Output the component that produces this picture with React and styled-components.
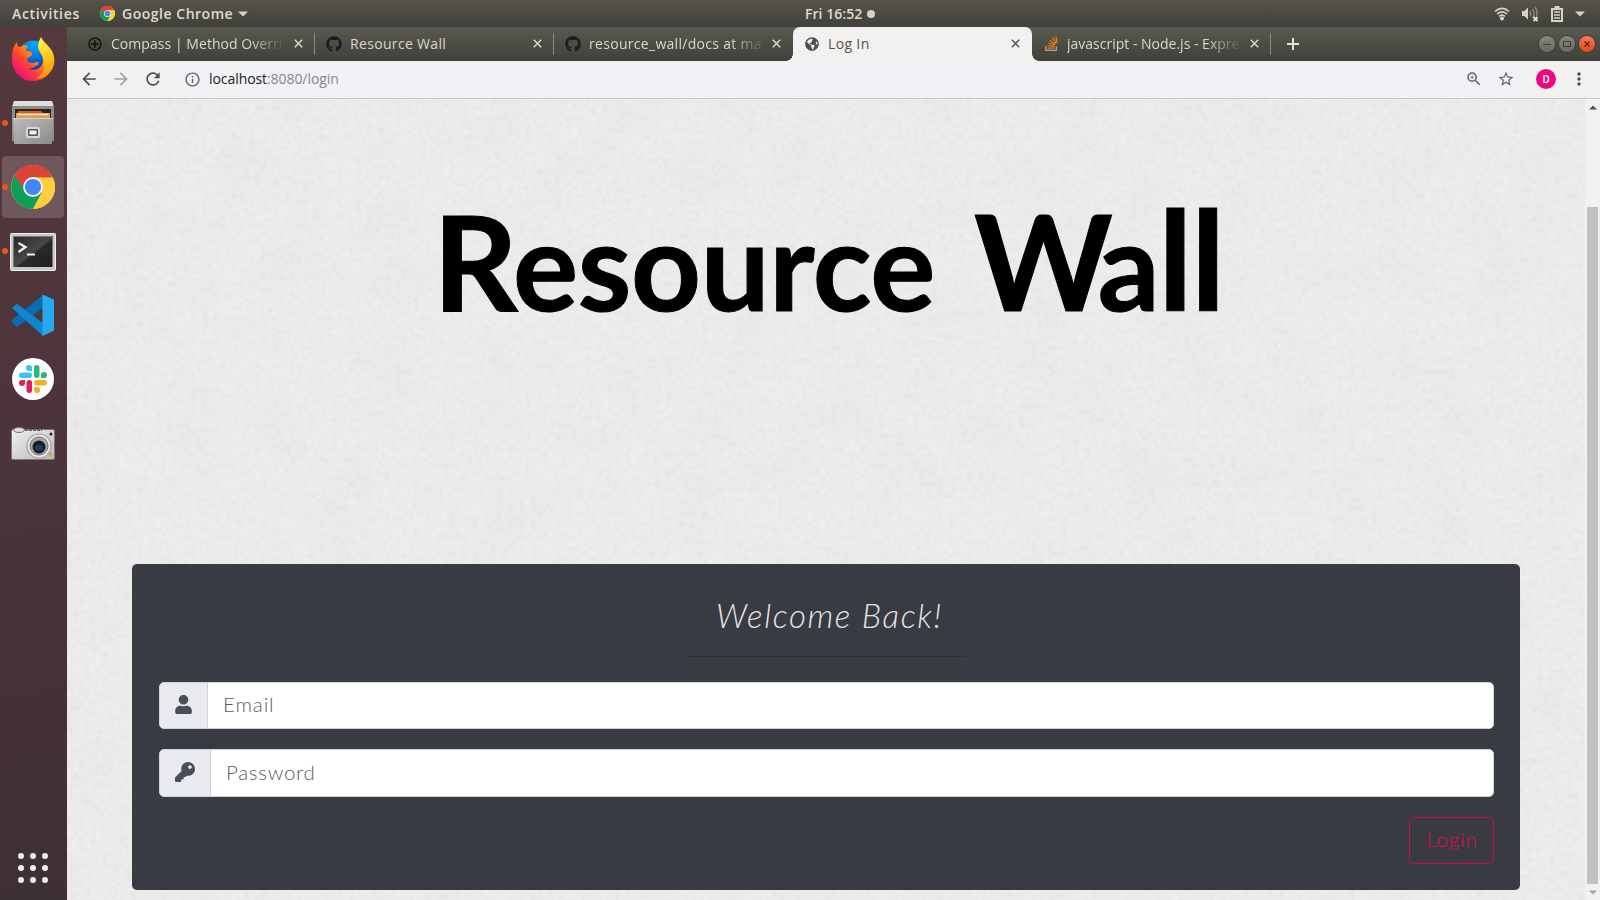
import React from "react";
import styled, { createGlobalStyle } from "styled-components";
import { FaGithub, FaUser, FaKey, FaGlobeAmericas } from "react-icons/fa";
import { MdArrowBack, MdArrowForward, MdRefresh, MdInfoOutline, MdStarBorder, MdOutlineZoomIn } from "react-icons/md";

const Global = createGlobalStyle`
  * { box-sizing: border-box; }
  html, body { margin: 0; overflow: hidden; }
  body { font-family: "Open Sans", "Noto Sans", sans-serif; }
  svg { display: block; flex: none; }
`;

const Desktop = styled.div`
  display: flex;
  flex-direction: column;
  width: 1600px;
  height: 900px;
  overflow: hidden;
`;

/* ---------- system bar ---------- */
const SystemBar = styled.header`
  display: grid;
  grid-template-columns: 1fr auto 1fr;
  align-items: center;
  height: 27px;
  flex: none;
  background: linear-gradient(#58544c, #403f3a);
  color: #dfdbd2;
  font-weight: 600;
  font-size: 14px;
  line-height: 26px;
  white-space: nowrap;
`;
const BarLeft = styled.div`
  display: flex;
  align-items: center;
  padding-left: 12px;
`;
const BarText = styled.span`
  padding-left: ${(p) => p.$pad || 0}px;
  letter-spacing: ${(p) => p.$track || 0}px;
  width: ${(p) => p.$w}px;
`;
const BarClock = styled.div`
  display: flex;
  align-items: center;
  gap: 4px;
  padding-left: 80px;
`;
const Dot = styled.i`
  width: 8px;
  height: 8px;
  border-radius: 50%;
  background: #d5d2ca;
`;
const BarRight = styled.div`
  display: flex;
  justify-content: flex-end;
  align-items: center;
  gap: 12px;
  padding-right: 15px;
`;

const Main = styled.div`
  display: flex;
  flex: 1;
  min-height: 0;
`;

/* ---------- dock ---------- */
const Dock = styled.nav`
  display: flex;
  flex-direction: column;
  width: 67px;
  flex: none;
  padding-bottom: 8px;
  background: linear-gradient(172deg, #54393d 0%, #4c343a 45%, #453137 75%, #3e3133 100%);
`;
const DockItem = styled.div`
  display: flex;
  align-items: center;
  height: 62px;
  width: 62px;
  margin: 1px 0 1px 2px;
  border-radius: 4px;
  background: ${(p) => (p.$active ? "#6f585c" : "transparent")};
`;
const RunningDot = styled.i`
  width: 6px;
  height: 6px;
  border-radius: 50%;
  background: ${(p) => (p.$on ? "#e95420" : "transparent")};
`;
const DockIcon = styled.div`
  display: flex;
  justify-content: center;
  width: 50px;
  padding-top: ${(p) => p.$drop || 0}px;
`;
const AppsGrid = styled.div`
  display: grid;
  grid-template-columns: repeat(3, 6px);
  gap: 6px;
  margin: auto 0 9px 18px;
`;
const AppDot = styled.i`
  width: 6px;
  height: 6px;
  border-radius: 50%;
  background: #f0eeee;
`;

/* ---------- browser ---------- */
const Browser = styled.section`
  display: flex;
  flex-direction: column;
  flex: 1;
  min-width: 0;
`;
const TabStrip = styled.div`
  display: flex;
  height: 34px;
  flex: none;
  padding-left: 9px;
  background: linear-gradient(#5b5a50, #403f39);
`;
const Tab = styled.div`
  position: relative;
  display: flex;
  align-items: center;
  width: 239px;
  padding: 0 10px 1px 11px;
  border-right: 1px solid ${(p) => (p.$line ? "#8b8a80" : "transparent")};
  border-image: ${(p) => (p.$line ? "linear-gradient(transparent 20%, #8b8a80 20%, #8b8a80 80%, transparent 80%) 1" : "none")};
  color: ${(p) => (p.$active ? "#53514b" : "#dad8cb")};
  ${(p) =>
    p.$active &&
    `
    background: #f2f1ef;
    border-right: 0;
    padding-right: 11px;
    border-radius: 7px 7px 0 0;
    &::before, &::after {
      content: "";
      position: absolute;
      bottom: 0;
      width: 7px;
      height: 7px;
    }
    &::before { left: -7px; background: radial-gradient(circle at 0 0, transparent 6.5px, #f2f1ef 7px); }
    &::after { right: -7px; background: radial-gradient(circle at 100% 0, transparent 6.5px, #f2f1ef 7px); }
  `}
`;
const TabIcon = styled.span`
  display: flex;
  justify-content: center;
  width: 16px;
  margin-right: 8px;
  color: ${(p) => p.$color};
`;
const TabTitle = styled.span`
  white-space: nowrap;
  font-size: 14px;
  line-height: 24px;
  letter-spacing: ${(p) => p.$track || 0}px;
  mask-image: ${(p) => (p.$fade ? "linear-gradient(90deg, #000 calc(100% - 34px), rgba(0, 0, 0, 0.12))" : "none")};
`;
const TabClose = styled.span`
  display: flex;
  justify-content: center;
  margin-left: auto;
  width: 11px;
`;
const NewTab = styled.span`
  display: flex;
  align-items: center;
  padding-left: 16px;
`;
const WindowButtons = styled.div`
  display: flex;
  align-items: center;
  gap: 4px;
  margin-left: auto;
  padding-right: 5px;
`;
const WinButton = styled.span`
  display: flex;
  align-items: center;
  justify-content: center;
  width: 16px;
  height: 16px;
  border-radius: 50%;
  background: ${(p) => (p.$close ? "linear-gradient(#f37e5a, #e2451a)" : "linear-gradient(#86867e, #6a6a62)")};
  box-shadow: 0 0 0 1px #3b3a35;
`;

const Toolbar = styled.div`
  display: flex;
  align-items: center;
  height: 38px;
  flex: none;
  padding: 0 12px 1px 12px;
  border-bottom: 1px solid #c8c8c6;
  background: #f2f1ef;
  color: #4d4d4d;
`;
const NavButton = styled.span`
  display: flex;
  width: 32px;
  opacity: ${(p) => (p.$off ? 0.48 : 1)};
`;
const Omnibox = styled.div`
  display: flex;
  align-items: center;
  flex: 1;
  height: 28px;
  margin-right: 11px;
  padding: 0 10px 0 9px;
  border-radius: 14px;
  background: #f1f2f5;
  color: #5f6368;
`;
const Url = styled.span`
  flex: 1;
  padding-left: 8px;
  font-size: 14px;
  line-height: 26px;
  letter-spacing: -0.07px;
  color: #85878b;
  b { color: #202124; font-weight: 400; }
`;
const OmniAction = styled.span`
  display: flex;
  margin-left: 14px;
`;
const Avatar = styled.span`
  display: flex;
  align-items: center;
  justify-content: center;
  width: 20px;
  height: 20px;
  margin-right: 14px;
  border-radius: 50%;
  background: #f0047f;
  color: #fff;
  font: 500 11px Roboto, sans-serif;
`;

const Viewport = styled.div`
  display: flex;
  flex: 1;
  min-height: 0;
`;
const Page = styled.main`
  position: relative;
  display: flex;
  flex-direction: column;
  flex: 1;
  background: #eeedec;
`;
const Paper = styled.svg`
  position: absolute;
  inset: 0;
  width: 100%;
  height: 100%;
`;
const Scrollbar = styled.div`
  display: flex;
  flex-direction: column;
  align-items: center;
  width: 15px;
  padding: 6px 0 5px;
  background: #f1f1f1;
`;
const Thumb = styled.div`
  width: 11px;
  height: 678px;
  margin: 97px 0 6px;
  background: #c1c1c1;
`;

const Hero = styled.h1`
  position: relative;
  display: flex;
  align-items: baseline;
  height: 465px;
  margin: 0;
  padding: 79px 0 0 366px;
  color: #000;
  font: 700 122px/160px Lato, sans-serif;
  -webkit-text-stroke: 1px #000;
  white-space: nowrap;
`;
const HeroWord = styled.span`
  display: block;
  width: ${(p) => p.$w}px;
  letter-spacing: ${(p) => p.$track}px;
  &::first-letter {
    font-size: 132px;
    letter-spacing: ${(p) => p.$capTrack}px;
  }
`;
const Tall = styled.span`
  font-size: 138px;
`;
const Card = styled.form`
  position: relative;
  display: flex;
  flex-direction: column;
  width: 1388px;
  height: 326px;
  margin-left: 65px;
  padding: 28px 26px 26px 27px;
  border-radius: 5px;
  background: #393b43;
  font-family: Lato, sans-serif;
  font-weight: 300;
`;
const Welcome = styled.h2`
  align-self: center;
  margin: 0 0 0 6px;
  color: #e4e4e4;
  font: italic 300 33px/46px Lato, sans-serif;
  letter-spacing: 1.6px;
`;
const Rule = styled.hr`
  width: 278px;
  height: 1px;
  margin: 18px 0 25px 528px;
  border: 0;
  background: #30312f;
`;
const Field = styled.label`
  display: flex;
  height: ${(p) => p.$h}px;
  margin-bottom: 20px;
  overflow: hidden;
  border: 1px solid #ced4da;
  border-radius: 5px;
  background: #fff;
`;
const Addon = styled.span`
  display: flex;
  align-items: center;
  justify-content: center;
  width: ${(p) => p.$w}px;
  padding-bottom: 2px;
  border-right: 1px solid #ced4da;
  background: #e9eaee;
  color: #4a4e58;
`;
const Input = styled.input`
  flex: 1;
  padding: 0 0 3px 15px;
  border: 0;
  outline: 0;
  font: 300 20.5px Lato, sans-serif;
  letter-spacing: ${(p) => p.$track}px;
  &::placeholder { color: #555c66; opacity: 1; }
`;
const LoginButton = styled.button`
  align-self: flex-end;
  width: 85px;
  height: 47px;
  padding: 0 0 3px 1px;
  border: 1px solid #d10a45;
  border-radius: 5px;
  background: transparent;
  color: #e80549;
  font: 300 20.5px Lato, sans-serif;
  letter-spacing: 0.8px;
`;

/* ---------- drawings ---------- */
const Caret = () => (
  <svg width="10" height="6" viewBox="0 0 10 6"><path d="M0 .5h10L5 5.5z" fill="#d5d2ca" /></svg>
);
const Cross = () => (
  <svg width="9" height="9" viewBox="0 0 9 9"><path d="M.8.8l7.4 7.4M8.2.8L.8 8.2" stroke="currentColor" strokeWidth="1.500" /></svg>
);
const Chrome = ({ size }) => (
  <svg width={size} height={size} viewBox="0 0 48 48">
    <circle cx="24" cy="24" r="24" fill="#fccd3f" />
    <path d="M24 24L13.6 30 3.2 12A24 24 0 0 1 44.8 12L46 14H24z" fill="#dc4437" />
    <path d="M3.5 12A24 24 0 0 0 24 48l10.4-18-10.4-5-8 2z" fill="#109d58" />
    <path d="M24 13.5h21.6A24 24 0 0 1 24 48l10-19z" fill="#fccd3f" />
    <circle cx="24" cy="24" r="10.8" fill="#f3f3f3" />
    <circle cx="24" cy="24" r="8.8" fill="#4285f4" />
  </svg>
);
const Firefox = () => (
  <svg width="44" height="46" viewBox="0 0 44 46">
    <defs>
      <linearGradient id="ffBody" x1=".9" y1=".1" x2=".15" y2=".8">
        <stop offset="0" stopColor="#ffe226" /><stop offset=".38" stopColor="#ff9a12" /><stop offset=".68" stopColor="#ff4530" /><stop offset="1" stopColor="#ee1478" />
      </linearGradient>
      <linearGradient id="ffTail" x1=".4" y1="0" x2=".6" y2="1">
        <stop offset="0" stopColor="#fff44f" /><stop offset=".5" stopColor="#ffc71f" /><stop offset="1" stopColor="#ff8a13" />
      </linearGradient>
      <radialGradient id="ffGlobe" cx=".5" cy=".1" r=".9">
        <stop offset="0" stopColor="#0aa8f8" /><stop offset=".55" stopColor="#0762d4" /><stop offset="1" stopColor="#33128a" />
      </radialGradient>
    </defs>
    <circle cx="23" cy="22" r="17.500" fill="url(#ffGlobe)" />
    <path d="M6 6c0 3 1 5 3 5 3-2 6-2 8-1-2 2-2 4-2 5 3 0 7 1 6 4-1 2-5 2-5 5 1 3 5 4 10 2 3 0 2 3-1 4-3 2-5 3-8 2 6 4 15 1 15-8 0-5-3-9-4-13L41 15c6 15-4 30-19 30C8 45 0 33 1 21 1 14 3 9 6 6z" fill="url(#ffBody)" />
    <path d="M30 1c2 5 9 9 12 16 3 8 1 17-6 22-4 3-7 4-11 3 8-3 9-11 8-17-1-7-6-9-6-15 0-4 2-7 3-9z" fill="url(#ffTail)" />
  </svg>
);
const Files = () => (
  <svg width="42" height="44" viewBox="0 0 42 44">
    <defs>
      <linearGradient id="cabinet" x1="0" y1="0" x2="1" y2="1"><stop offset="0" stopColor="#bdbdbd" /><stop offset="1" stopColor="#8a8a8a" /></linearGradient>
    </defs>
    <path d="M2 0h38l2 6v34H0V6z" fill="#8c8c8c" />
    <path d="M2 0h38l1.500 5H.5z" fill="#dedede" />
    <path d="M3 8h36v12H3z" fill="#292522" />
    <path d="M6 10h23l2 2h6v7H5z" fill="#d65a1c" />
    <path d="M4 12h34v6H4z" fill="#e99952" />
    <path d="M6 13.500h30" stroke="#fff6df" strokeWidth="1.300" />
    <path d="M1 17h40l-1 26H2z" fill="url(#cabinet)" />
    <path d="M1.500 17.500h39" stroke="#d2d2d2" />
    <rect x="14" y="26" width="14" height="11" rx="2" fill="#d8d8d8" />
    <rect x="16" y="28" width="10" height="7" rx="1" fill="#555" />
    <rect x="17.500" y="29.500" width="7" height="4" fill="#eee" />
  </svg>
);
const Terminal = () => (
  <svg width="46" height="38" viewBox="0 0 46 38">
    <defs>
      <linearGradient id="screen" x1="0" y1="0" x2="1" y2="1"><stop offset="0" stopColor="#2a2a2a" /><stop offset=".5" stopColor="#484848" /><stop offset=".55" stopColor="#292929" /><stop offset="1" stopColor="#202020" /></linearGradient>
    </defs>
    <rect x=".5" y=".5" width="45" height="37" rx="1" fill="#c9c9c9" stroke="#eee" />
    <rect x="3" y="3" width="40" height="31" fill="#777" />
    <rect x="4" y="4" width="38" height="30" fill="url(#screen)" />
    <path d="M8.500 10l7 4-7 5" fill="none" stroke="#eee" strokeWidth="2.300" />
    <path d="M17 21.500h8" stroke="#eee" strokeWidth="2" />
  </svg>
);
const VsCode = () => (
  <svg width="42" height="43" viewBox="0 0 42 43">
    <path d="M31 1v13L5 33l-5-4v-3z" fill="#0a6cb0" />
    <path d="M0 14l5-4 26 19v13z" fill="#0f87d0" />
    <path d="M30.500.500L42 5.500v31L30.500 42z" fill="#27a9f2" />
  </svg>
);
const Slack = () => (
  <svg width="42" height="42" viewBox="0 0 42 42">
    <circle cx="21" cy="21" r="21" fill="#fff" />
    <g fill="#36c5f0"><rect x="7" y="14.500" width="13" height="5.500" rx="2.750" /><path d="M20 13h-3a3 3 0 1 1 3-3z" /></g>
    <g fill="#2eb67d"><rect x="22" y="7" width="5.500" height="13" rx="2.750" /><path d="M29 20v-3a3 3 0 1 1 3 3z" /></g>
    <g fill="#ecb22e"><rect x="22" y="22" width="13" height="5.500" rx="2.750" /><path d="M22 29h3a3 3 0 1 1-3 3z" /></g>
    <g fill="#e01e5a"><rect x="14.500" y="22" width="5.500" height="13" rx="2.750" /><path d="M13 22v3a3 3 0 1 1-3-3z" /></g>
  </svg>
);
const Camera = () => (
  <svg width="44" height="34" viewBox="0 0 44 34">
    <defs>
      <linearGradient id="cam" x1="0" y1="0" x2="1" y2="1"><stop offset="0" stopColor="#f1f1f1" /><stop offset="1" stopColor="#b6b6b6" /></linearGradient>
    </defs>
    <rect x=".5" y="2.500" width="43" height="30" rx="1.500" fill="url(#cam)" stroke="#777" />
    <path d="M14 3h17" stroke="#666" strokeWidth="2" strokeDasharray="3 1" />
    <ellipse cx="8" cy="3" rx="5.500" ry="2.500" fill="#ddd" stroke="#777" />
    <circle cx="28" cy="19" r="12.500" fill="#999" />
    <circle cx="28" cy="19" r="11.500" fill="#e4e4e4" />
    <circle cx="28" cy="19" r="9" fill="#a5a5a5" stroke="#777" />
    <circle cx="28" cy="20" r="6.500" fill="#1c1c1c" />
    <rect x="24.500" y="18" width="7" height="5.500" rx="1.500" fill="#173c78" />
    <circle cx="40" cy="7" r="1.500" fill="#222" />
    <rect x="38" y="26" width="3" height="3" fill="#f0a020" />
  </svg>
);
const Wifi = () => (
  <svg width="16" height="14" viewBox="0 0 16 14" fill="none" stroke="#d5d2ca" strokeWidth="1.600">
    <path d="M1 4.300q7-6 14 0M3 7q5-4.300 10 0M5 9.400q3-2.600 6 0" /><circle cx="8" cy="11.500" r="1.300" fill="#d5d2ca" />
  </svg>
);
const Volume = () => (
  <svg width="17" height="16" viewBox="0 0 17 16" fill="none">
    <path d="M0 5h2.500L6 1.500v12L2.500 10H0z" fill="#d5d2ca" />
    <path d="M8 5q1.500 2.500 0 5M10.500 3q3 4.500 0 9M13 1q3 4.500 1.500 9" stroke="#8b8981" strokeWidth="1.400" />
    <path d="M11.500 11l4 4M15.500 11l-4 4" stroke="#e5e2da" strokeWidth="1.800" />
  </svg>
);
const Battery = () => (
  <svg width="12" height="16" viewBox="0 0 12 16">
    <path d="M1 3h10v12H1zM3.500 1h5" fill="none" stroke="#d5d2ca" strokeWidth="2" />
    <path d="M3 6h6M3 9h6M3 12h6" stroke="#d5d2ca" strokeWidth="1.700" />
  </svg>
);
const Compass = () => (
  <svg width="14" height="14" viewBox="0 0 14 14" fill="none" stroke="#161615">
    <circle cx="7" cy="7" r="6" strokeWidth="1.600" /><path d="M7 3v8M3 7h8" strokeWidth="1.400" /><circle cx="7" cy="7" r="1.600" fill="#161615" />
  </svg>
);
const StackOverflow = () => (
  <svg width="13" height="15" viewBox="0 0 13 15" fill="none">
    <path d="M.7 10v4.300h10.600V10" stroke="#aaa9a3" strokeWidth="1.200" />
    <path d="M2.500 12.200h7M2.500 9.700l7 .7M3.200 7l6.600 2M4.800 4.200l5.700 3.900M7.500 1.500l3.700 5.600M11 .5l1 6" stroke="#f17a14" strokeWidth="1.300" />
  </svg>
);

const DOCK = [
  { id: "firefox", icon: <Firefox /> },
  { id: "files", icon: <Files />, running: true },
  { id: "chrome", icon: <Chrome size={44} />, running: true, active: true },
  { id: "terminal", icon: <Terminal />, running: true, drop: 2 },
  { id: "code", icon: <VsCode /> },
  { id: "slack", icon: <Slack /> },
  { id: "camera", icon: <Camera />, drop: 2 },
];

const TABS = [
  { title: "Compass | Method Overri", icon: <Compass />, line: true, fade: true, track: 0.05 },
  { title: "Resource Wall", icon: <FaGithub size={16} />, color: "#1b1c1e", line: true, track: 0.33 },
  { title: "resource_wall/docs at ma", icon: <FaGithub size={16} />, color: "#1b1c1e", fade: true, track: 0.3 },
  { title: "Log In", icon: <FaGlobeAmericas size={14} />, color: "#4b4c4e", active: true, track: 0.35 },
  { title: "javascript - Node.js - Expre", icon: <StackOverflow />, line: true, fade: true, track: 0 },
];

export default function App() {
  return (
    <Desktop>
      <Global />
      <SystemBar>
        <BarLeft>
          <BarText $w={88} $track={0.65}>Activities</BarText>
          <Chrome size={15} />
          <BarText $w={123} $track={0.52} $pad={7}>Google Chrome</BarText>
          <Caret />
        </BarLeft>
        <BarClock>
          <BarText $w={58} $track={0.05}>Fri 16:52</BarText>
          <Dot />
        </BarClock>
        <BarRight><Wifi /><Volume /><Battery /><Caret /></BarRight>
      </SystemBar>
      <Main>
        <Dock>
          {DOCK.map((d) => (
            <DockItem key={d.id} $active={d.active}>
              <RunningDot $on={d.running} />
              <DockIcon $drop={d.drop}>{d.icon}</DockIcon>
            </DockItem>
          ))}
          <AppsGrid>{Array.from({ length: 9 }, (_, i) => <AppDot key={i} />)}</AppsGrid>
        </Dock>
        <Browser>
          <TabStrip>
            {TABS.map((t) => (
              <Tab key={t.title} $active={t.active} $line={t.line}>
                <TabIcon $color={t.color}>{t.icon}</TabIcon>
                <TabTitle $fade={t.fade} $track={t.track}>{t.title}</TabTitle>
                <TabClose><Cross /></TabClose>
              </Tab>
            ))}
            <NewTab>
              <svg width="12" height="12" viewBox="0 0 12 12"><path d="M6 0v12M0 6h12" stroke="#e4e2d8" strokeWidth="2" /></svg>
            </NewTab>
            <WindowButtons>
              <WinButton><svg width="8" height="8"><path d="M0 4.500h8" stroke="#3b3a35" /></svg></WinButton>
              <WinButton><svg width="8" height="8"><path d="M.5 1.500h7v5h-7z" fill="none" stroke="#3b3a35" /></svg></WinButton>
              <WinButton $close><svg width="6" height="6"><path d="M.5.5l5 5M5.500.5l-5 5" stroke="#57200c" strokeWidth="1.200" /></svg></WinButton>
            </WindowButtons>
          </TabStrip>
          <Toolbar>
            <NavButton><MdArrowBack size={20} /></NavButton>
            <NavButton $off><MdArrowForward size={20} /></NavButton>
            <NavButton><MdRefresh size={20} /></NavButton>
            <Omnibox>
              <MdInfoOutline size={17} />
              <Url><b>localhost</b>:8080/login</Url>
              <OmniAction><MdOutlineZoomIn size={18} /></OmniAction>
              <OmniAction><MdStarBorder size={18} /></OmniAction>
            </Omnibox>
            <Avatar>D</Avatar>
            <svg width="18" height="20" viewBox="0 0 18 20" fill="#4d4d4d"><circle cx="9" cy="5" r="1.700" /><circle cx="9" cy="10" r="1.700" /><circle cx="9" cy="15" r="1.700" /></svg>
          </Toolbar>
          <Viewport>
            <Page>
              <Paper aria-hidden="true">
                <filter id="grain" x="0" y="0" width="100%" height="100%" colorInterpolationFilters="sRGB">
                  <feTurbulence type="fractalNoise" baseFrequency="0.17" numOctaves="4" seed="8" />
                  <feColorMatrix values="0 0 0 0 .5  0 0 0 0 .5  0 0 0 0 .48  1 0 0 0 -.4" />
                </filter>
                <filter id="blotch" x="0" y="0" width="100%" height="100%" colorInterpolationFilters="sRGB">
                  <feTurbulence type="fractalNoise" baseFrequency="0.02" numOctaves="2" seed="3" />
                  <feColorMatrix values="0 0 0 0 .5  0 0 0 0 .5  0 0 0 0 .48  1 0 0 0 -.4" />
                </filter>
                <rect width="100%" height="100%" filter="url(#grain)" opacity=".13" />
                <rect width="100%" height="100%" filter="url(#blotch)" opacity=".06" />
              </Paper>
              <Hero>
                <HeroWord $w={541} $track={-0.3} $capTrack={-5}>Resource</HeroWord>{" "}
                <HeroWord $w={260} $track={-1.5} $capTrack={-15}>Wa<Tall>ll</Tall></HeroWord>
              </Hero>
              <Card onSubmit={(e) => e.preventDefault()}>
                <Welcome>Welcome Back!</Welcome>
                <Rule />
                <Field $h={47}>
                  <Addon $w={48}><FaUser size={19} /></Addon>
                  <Input placeholder="Email" $track={0.9} />
                </Field>
                <Field $h={48}>
                  <Addon $w={51}><FaKey size={20} /></Addon>
                  <Input placeholder="Password" $track={0.7} />
                </Field>
                <LoginButton>Login</LoginButton>
              </Card>
            </Page>
            <Scrollbar>
              <svg width="8" height="5" viewBox="0 0 8 5"><path d="M0 4.500L4 .5l4 4z" fill="#505050" /></svg>
              <Thumb />
              <svg width="8" height="5" viewBox="0 0 8 5"><path d="M0 .5l4 4 4-4z" fill="#a3a3a3" /></svg>
            </Scrollbar>
          </Viewport>
        </Browser>
      </Main>
    </Desktop>
  );
}
